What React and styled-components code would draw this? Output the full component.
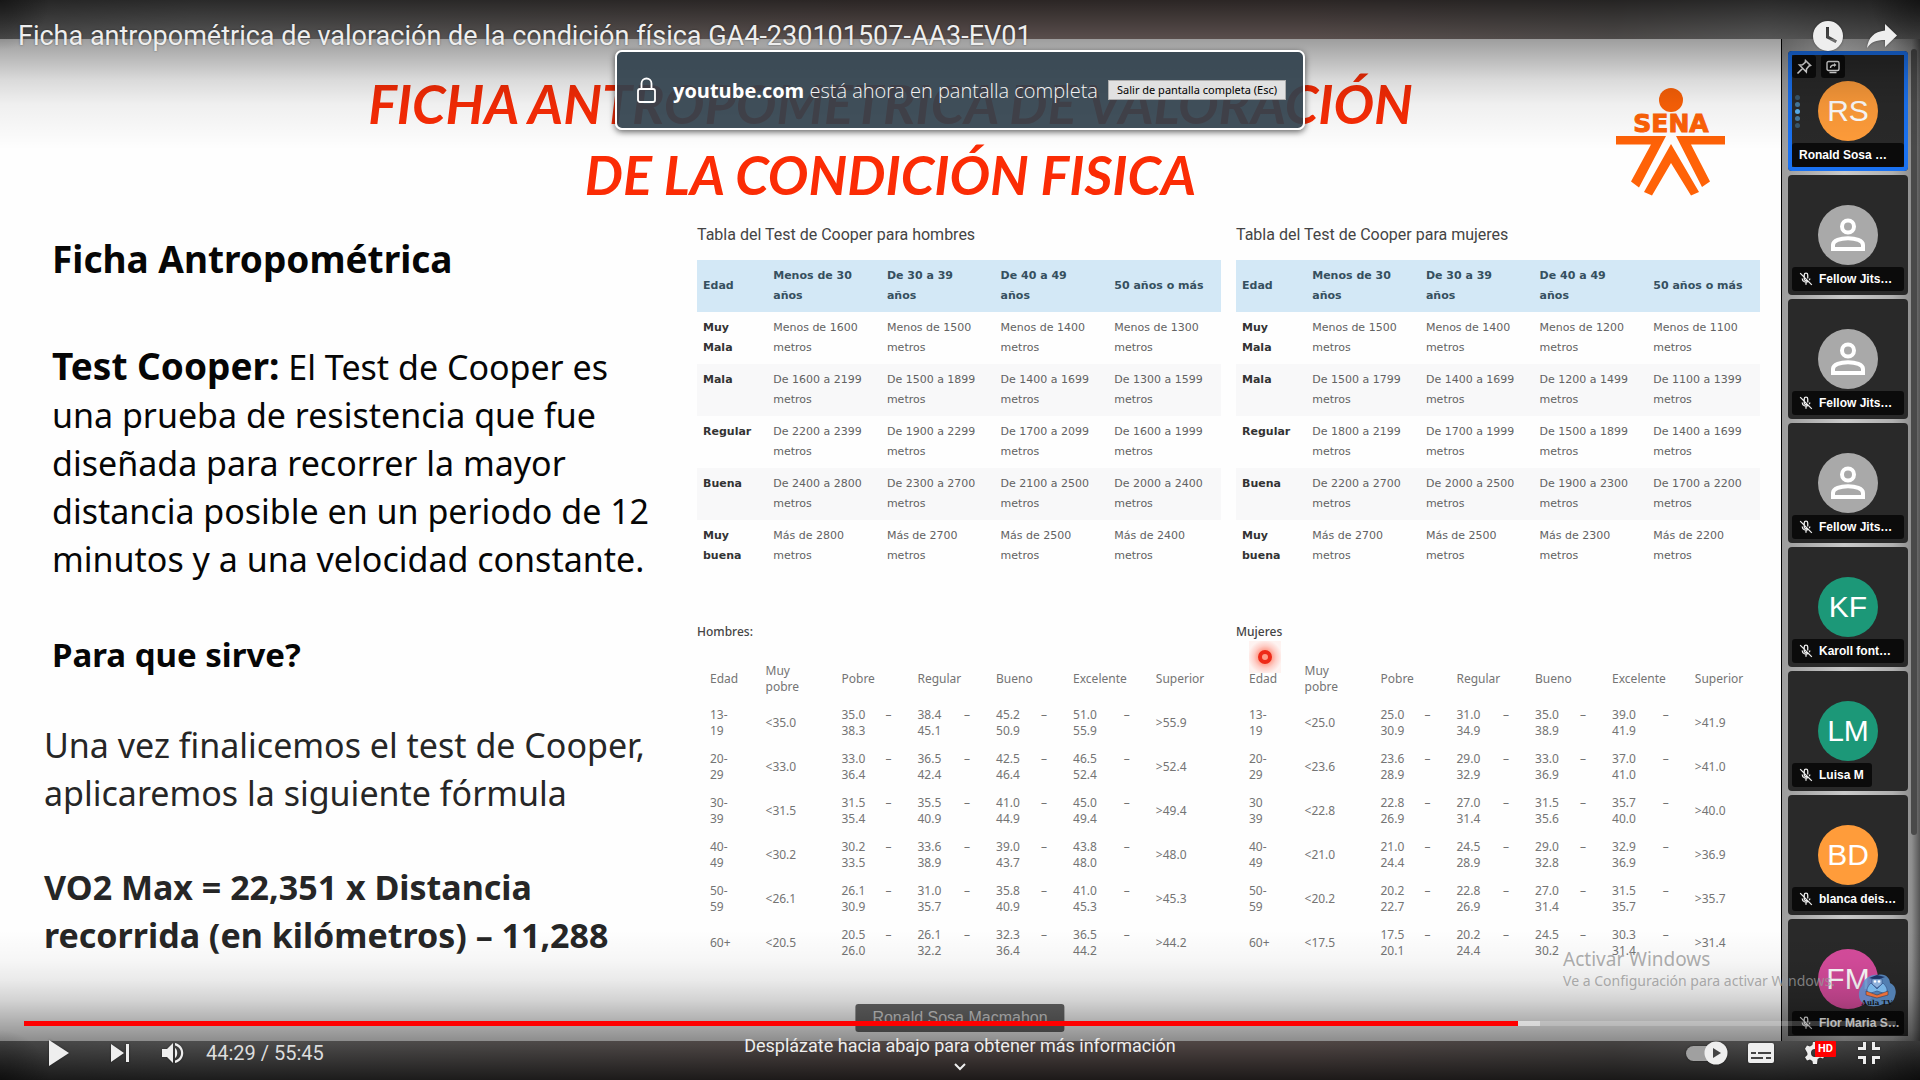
import React from "react";
import styled, { createGlobalStyle } from "styled-components";

const Global = createGlobalStyle`
  *, *::before, *::after { box-sizing: border-box; }
  html, body { margin: 0; background: #222; }
  h1, h2, h3, p { margin: 0; font-weight: inherit; font-size: inherit; }
  button { margin: 0; padding: 0; border: 0; background: none; color: inherit; font: inherit; cursor: pointer; }
`;

/* ---------- Player shell ---------- */

const Player = styled.main`
  position: relative;
  height: 100vh;
  overflow: hidden;
  font-family: Roboto, "Liberation Sans", sans-serif;
  color: #eee;
`;

const Video = styled.section`
  display: grid;
  grid-template: 39px minmax(0, 1fr) 39px / minmax(0, 1fr) 139px;
  height: 100%;
  background: linear-gradient(to right, #7c7c7c, #8c8c8c 10%, #8b8583 26%, #907e7b 45%, #907e7b 68%, #7c7775 84%, #8a8a8a 92%, #6c6c6c);
`;

const Shade = styled.div`
  position: absolute;
  inset: 0;
  pointer-events: none;
  background:
    radial-gradient(circle at 0 0, rgba(0,0,0,.4), transparent 50px),
    radial-gradient(circle at 0 100%, rgba(0,0,0,.4), transparent 50px),
    radial-gradient(circle at 100% 0, rgba(0,0,0,.4), transparent 50px),
    radial-gradient(circle at 100% 100%, rgba(0,0,0,.4), transparent 50px),
    linear-gradient(to bottom, rgba(0,0,0,.7), rgba(0,0,0,.38) 39px, rgba(0,0,0,.26) 60px, rgba(0,0,0,.14) 80px, rgba(0,0,0,.06) 104px, transparent 150px),
    linear-gradient(to top, rgba(0,0,0,.8), rgba(0,0,0,.46) 37px, rgba(0,0,0,.3) 60px, rgba(0,0,0,.17) 80px, rgba(0,0,0,.08) 100px, rgba(0,0,0,.03) 120px, transparent 150px);
`;

/* ---------- Slide ---------- */

const Slide = styled.article`
  grid-row: 2;
  display: flex;
  flex-direction: column;
  background: #fefefe;
  overflow: hidden;
`;

const SlideHead = styled.header`
  display: grid;
  grid-template-columns: 1fr auto 1fr;
  padding: 29px 55px 0;
`;

const SlideTitle = styled.h1`
  grid-column: 2;
  font: italic 700 54px/71px Lato, "Noto Sans", sans-serif;
  color: #fb2c05;
  text-align: center;
`;

const Logo = styled.svg`
  justify-self: end;
  width: 110px;
  height: 108px;
  margin-top: 20px;
`;

const SlideBody = styled.div`
  display: grid;
  grid-template-columns: 697fr 1084fr;
  padding-top: 13px;
`;

const Copy = styled.div`
  display: flex;
  flex-direction: column;
  gap: 42px;
  padding: 12px 0 0 44px;
  font: 34px/48px "Noto Sans", "Open Sans", sans-serif;
  color: #262626;
  white-space: nowrap;
`;

const Topic = styled.section`
  display: flex;
  flex-direction: column;
  gap: 48px;
  padding-left: 8px;
  color: #060606;
`;

const Formula = styled.section`
  display: flex;
  flex-direction: column;
  gap: 46px;
`;

const Heading = styled.h2`
  font-size: 37px;
  font-weight: 700;
  padding-bottom: 12px;
`;

const Lead = styled.strong`
  font-size: 37px;
  line-height: 1;
`;

const Question = styled.h3`
  font-size: 33px;
  font-weight: 700;
`;

const Strong = styled.p`
  font-weight: 700;
`;

const Charts = styled.div`
  position: relative;
  display: grid;
  grid-template-columns: 1fr 1fr;
  column-gap: 15px;
  row-gap: 52px;
  padding-right: 21px;
  align-content: start;
`;

const CooperTable = styled.table`
  width: 100%;
  table-layout: fixed;
  border-collapse: collapse;
  font: 11px/20px "DejaVu Sans", Verdana, sans-serif;
  color: #626262;

  caption {
    padding-bottom: 13px;
    font: 16px/24px Roboto, sans-serif;
    color: #444;
    text-align: left;
  }
  th, td { padding: 6px 0 6px 6px; text-align: left; vertical-align: top; }
  th { color: #333; font-weight: 700; }
  thead tr { background: #d3e8f6; }
  thead th { color: #36505f; vertical-align: middle; }
  tbody tr:nth-child(even) { background: #f8f8f9; }
`;

const RangeTable = styled.table`
  width: 100%;
  table-layout: fixed;
  border-collapse: collapse;
  font: 12px/16px "Noto Sans", "Open Sans", sans-serif;
  color: #747474;

  caption {
    padding-bottom: 17px;
    font-weight: 500;
    color: #444;
    text-align: left;
  }
  th, td { padding: 6px 13px; text-align: left; font-weight: 400; white-space: nowrap; }
`;

const Col = styled.col`
  width: ${(p) => p.$share}%;
`;

const RangeStart = styled.span`
  display: flex;
  justify-content: space-between;
`;

const Pointer = styled.span`
  position: absolute;
  left: 552px;
  top: 418px;
  display: grid;
  place-items: center;
  width: 32px;
  height: 32px;
  background: radial-gradient(circle, rgba(255,90,60,.7) 20%, rgba(255,120,100,.35) 50%, rgba(255,160,140,.12) 75%);
  &::after {
    content: "";
    width: 14px;
    height: 14px;
    border: 4px solid #ee2a18;
    border-radius: 50%;
    background: #ff9c88;
  }
`;

/* ---------- Participants ---------- */

const Participants = styled.aside`
  grid-row: 2;
  position: relative;
  padding: 12px 12px 5px 6px;
  border-left: 1px solid #000;
  background: linear-gradient(to right, #9c9c9c, #c9c9c9 45%, #b0b0b0 80%, #8e8e8e 94%, #555);
`;

const TileList = styled.ul`
  display: flex;
  flex-direction: column;
  gap: 4px;
  height: 100%;
  margin: 0;
  padding: 0;
  overflow: hidden;
  list-style: none;
`;

const Tile = styled.li`
  position: relative;
  flex: none;
  display: flex;
  flex-direction: column;
  gap: 2px;
  height: 120px;
  padding: 30px 4px 0;
  border-radius: 4px;
  background: #292929;
  box-shadow: ${(p) => (p.$active ? "inset 0 0 0 4px #1a72f2" : "none")};
`;

const Avatar = styled.span`
  display: grid;
  place-items: center;
  align-self: center;
  width: 60px;
  height: 60px;
  border-radius: 50%;
  background: ${(p) => p.$color};
  color: #fff;
  font: 30px/60px "Liberation Sans", Arial, sans-serif;
`;

const NameTag = styled.span`
  display: flex;
  align-items: center;
  gap: 6px;
  align-self: ${(p) => (p.$short ? "flex-start" : "stretch")};
  height: 24px;
  padding: 0 8px 0 7px;
  border-radius: 3px;
  background: rgba(0,0,0,.72);
  color: #fff;
  font: 700 12px/24px "Liberation Sans", Arial, sans-serif;
  white-space: nowrap;
  svg { flex: none; }
`;

const Badges = styled.span`
  position: absolute;
  top: 4px;
  left: 4px;
  display: flex;
  gap: 5px;
`;

const Badge = styled.span`
  display: grid;
  place-items: center;
  width: 24px;
  height: 23px;
  border-radius: 3px;
  background: rgba(0,0,0,.7);
`;

const Levels = styled.span`
  position: absolute;
  left: 7px;
  top: 44px;
  display: flex;
  flex-direction: column;
  gap: 2px;
`;

const Level = styled.i`
  width: 5px;
  height: 5px;
  border-radius: 50%;
  background: #5ab0ee;
  opacity: ${(p) => p.$strength};
`;

const Scrollbar = styled.span`
  position: absolute;
  right: 3px;
  top: 10px;
  width: 6px;
  height: 78.4%;
  border-radius: 3px;
  background: #4a4a4a;
`;

/* ---------- Overlays ---------- */

const SpeakerName = styled.span`
  position: absolute;
  left: 50%;
  bottom: 48px;
  transform: translateX(-50%);
  padding: 0 17px;
  border-radius: 3px;
  background: #686868;
  color: #d4d4d4;
  font: 16px/28px "Liberation Sans", Arial, sans-serif;
  white-space: nowrap;
`;

const Watermark = styled.p`
  position: absolute;
  right: 85px;
  bottom: 88px;
  color: rgba(150,150,150,.8);
  font: 14px/22px "Noto Sans", "Open Sans", sans-serif;
  white-space: nowrap;
`;

const WatermarkTitle = styled.strong`
  display: block;
  font-size: 19px;
  font-weight: 400;
`;

const ChannelMark = styled.svg`
  position: absolute;
  right: 24px;
  bottom: 72px;
  width: 38px;
  height: 34px;
`;

const TopBar = styled.header`
  position: absolute;
  inset: 0 0 auto;
  display: flex;
  align-items: center;
  gap: 24px;
  height: 72px;
  padding: 0 22px 0 18px;
  text-shadow: 0 0 2px rgba(0,0,0,.5);
`;

const VideoTitle = styled.h2`
  flex: 1;
  font-size: 27px;
  line-height: 32px;
`;

const Notice = styled.div`
  position: absolute;
  top: 50px;
  left: 50%;
  transform: translateX(-50%);
  display: flex;
  align-items: center;
  width: 690px;
  height: 80px;
  padding: 0 17px 0 20px;
  border: 2px solid #fff;
  border-radius: 7px;
  background: rgba(50,66,77,.93);
  box-shadow: 0 2px 6px rgba(0,0,0,.6);
  color: #f4f4f4;
  font: 300 20px/28px "Open Sans", "Noto Sans", sans-serif;
  white-space: nowrap;
`;

const NoticeText = styled.p`
  flex: 1;
  padding: 2px 0 0 17px;
  strong { font-weight: 700; color: #fff; }
`;

const ExitButton = styled.button`
  height: 20px;
  padding: 0 8px;
  border: 1px solid #adadad;
  background: #e1e1e1;
  color: #000;
  font: 11px/16px "Noto Sans", "Open Sans", sans-serif;
`;

const BottomBar = styled.footer`
  position: absolute;
  inset: auto 0 0;
`;

const Progress = styled.input`
  appearance: none;
  display: block;
  width: calc(100% - 48px);
  height: 5px;
  margin: 0 24px;
  background: linear-gradient(to right, #f00 79.8%, rgba(255,255,255,.55) 79.8% 81%, rgba(255,255,255,.2) 81%);
  &::-webkit-slider-thumb { appearance: none; width: 0; height: 0; }
`;

const Controls = styled.div`
  display: grid;
  grid-template-columns: 1fr auto 1fr;
  height: 54px;
  padding: 0 24px;
`;

const Group = styled.div`
  display: flex;
  align-items: center;
  padding-left: 4px;
  justify-content: ${(p) => (p.$end ? "flex-end" : "flex-start")};
`;

const Control = styled.button`
  position: relative;
  display: grid;
  place-items: center;
  width: ${(p) => p.$width || 54}px;
  height: 54px;
  svg { fill: #eee; filter: drop-shadow(0 0 1px rgba(0,0,0,.4)); }
`;

const Time = styled.span`
  padding-left: 10px;
  color: #ddd;
  font-size: 20px;
  line-height: 24px;
`;

const More = styled.button`
  display: flex;
  flex-direction: column;
  align-items: center;
  align-self: start;
  gap: 5px;
  padding-top: 8px;
  font-size: 18px;
  line-height: 24px;
`;

const Hd = styled.span`
  position: absolute;
  left: 27px;
  top: 15px;
  padding: 0 3px;
  border-radius: 1px;
  background: #f00;
  color: #fff;
  font: 700 11px/16px Roboto, sans-serif;
`;

/* ---------- Icons ---------- */

const MicOff = () => (
  <svg width="14" height="14" viewBox="0 0 24 24" fill="none" stroke="#eee" strokeWidth="2.2">
    <path d="M9 9V5a3 3 0 0 1 6 0v6M9 9v3a3 3 0 0 0 5 2M5.500 11a6.500 6.500 0 0 0 10.500 5M18.500 11a6 6 0 0 1-.8 3M12 18v4M2 2l20 20" />
  </svg>
);

const Person = () => (
  <svg width="36" height="36" viewBox="0 0 36 36" fill="none" stroke="#fff" strokeWidth="4">
    <circle cx="18" cy="9.500" r="6" />
    <path d="M3 32v-4c0-9 30-9 30 0v4z" />
  </svg>
);

const Pin = () => (
  <svg width="16" height="16" viewBox="0 0 16 16" fill="none" stroke="#eee" strokeWidth="1.6">
    <path d="M9.500 1.500l5 5-1.500.5-2.500 3-.2 3L3.500 6l3-.2 2.800-2.500zM6.500 9.500L1.500 14.500" />
  </svg>
);

const Screen = () => (
  <svg width="14" height="14" viewBox="0 0 14 14" fill="none" stroke="#eee" strokeWidth="1.4">
    <rect x="1" y="1.500" width="12" height="9" rx="1.500" />
    <path d="M3.500 12.500h7M4.500 8c0-2 1.500-3 4-3" />
    <path d="M8 3l2.500 2L8 7z" fill="#eee" stroke="none" />
  </svg>
);

const SenaLogo = () => (
  <Logo viewBox="0 0 110 108" fill="#ff6207" role="img" aria-label="SENA">
    <circle cx="55" cy="12" r="12" />
    <text x="55" y="44" textAnchor="middle" fontFamily="DejaVu Sans, sans-serif" fontWeight="700" fontSize="25" stroke="#ff6207">SENA</text>
    <path d="M0 48H50L23 99.500 15 93.500 35 56.500H0zM109 48H60L86 99 94 93.500 75 56.500H109z" />
    <path d="M55 56L28 104l8 3.500L55 75l20 32.500 8-3.500z" />
  </Logo>
);

/* ---------- Data ---------- */

const ages = ["Edad", "Menos de 30\naños", "De 30 a 39\naños", "De 40 a 49\naños", "50 años o más"];
const levels = ["Muy\nMala", "Mala", "Regular", "Buena", "Muy\nbuena"];

const cooper = [
  {
    title: "Tabla del Test de Cooper para hombres",
    rows: [
      ["Menos de 1600", "Menos de 1500", "Menos de 1400", "Menos de 1300"],
      ["De 1600 a 2199", "De 1500 a 1899", "De 1400 a 1699", "De 1300 a 1599"],
      ["De 2200 a 2399", "De 1900 a 2299", "De 1700 a 2099", "De 1600 a 1999"],
      ["De 2400 a 2800", "De 2300 a 2700", "De 2100 a 2500", "De 2000 a 2400"],
      ["Más de 2800", "Más de 2700", "Más de 2500", "Más de 2400"],
    ],
  },
  {
    title: "Tabla del Test de Cooper para mujeres",
    rows: [
      ["Menos de 1500", "Menos de 1400", "Menos de 1200", "Menos de 1100"],
      ["De 1500 a 1799", "De 1400 a 1699", "De 1200 a 1499", "De 1100 a 1399"],
      ["De 1800 a 2199", "De 1700 a 1999", "De 1500 a 1899", "De 1400 a 1699"],
      ["De 2200 a 2700", "De 2000 a 2500", "De 1900 a 2300", "De 1700 a 2200"],
      ["Más de 2700", "Más de 2500", "Más de 2300", "Más de 2200"],
    ],
  },
];

const rangeHead = ["Edad", "Muy\npobre", "Pobre", "Regular", "Bueno", "Excelente", "Superior"];

const ranges = [
  {
    title: "Hombres:",
    rows: [
      ["13-\n19", "<35.0", "35.0 38.3", "38.4 45.1", "45.2 50.9", "51.0 55.9", ">55.9"],
      ["20-\n29", "<33.0", "33.0 36.4", "36.5 42.4", "42.5 46.4", "46.5 52.4", ">52.4"],
      ["30-\n39", "<31.5", "31.5 35.4", "35.5 40.9", "41.0 44.9", "45.0 49.4", ">49.4"],
      ["40-\n49", "<30.2", "30.2 33.5", "33.6 38.9", "39.0 43.7", "43.8 48.0", ">48.0"],
      ["50-\n59", "<26.1", "26.1 30.9", "31.0 35.7", "35.8 40.9", "41.0 45.3", ">45.3"],
      ["60+", "<20.5", "20.5 26.0", "26.1 32.2", "32.3 36.4", "36.5 44.2", ">44.2"],
    ],
  },
  {
    title: "Mujeres",
    rows: [
      ["13-\n19", "<25.0", "25.0 30.9", "31.0 34.9", "35.0 38.9", "39.0 41.9", ">41.9"],
      ["20-\n29", "<23.6", "23.6 28.9", "29.0 32.9", "33.0 36.9", "37.0 41.0", ">41.0"],
      ["30\n39", "<22.8", "22.8 26.9", "27.0 31.4", "31.5 35.6", "35.7 40.0", ">40.0"],
      ["40-\n49", "<21.0", "21.0 24.4", "24.5 28.9", "29.0 32.8", "32.9 36.9", ">36.9"],
      ["50-\n59", "<20.2", "20.2 22.7", "22.8 26.9", "27.0 31.4", "31.5 35.7", ">35.7"],
      ["60+", "<17.5", "17.5 20.1", "20.2 24.4", "24.5 30.2", "30.3 31.4", ">31.4"],
    ],
  },
];

const people = [
  { initials: "RS", name: "Ronald Sosa …", color: "#ff9c3a", active: true },
  { name: "Fellow Jits…", color: "#a9a9a9" },
  { name: "Fellow Jits…", color: "#a9a9a9" },
  { name: "Fellow Jits…", color: "#a9a9a9" },
  { initials: "KF", name: "Karoll font…", color: "#1c9878" },
  { initials: "LM", name: "Luisa M", color: "#1c9878", short: true },
  { initials: "BD", name: "blanca deis…", color: "#ff9c3a" },
  { initials: "FM", name: "Flor Maria S…", color: "#d64c9c" },
];

const lines = (text) =>
  text.split("\n").map((line, i) => (
    <React.Fragment key={i}>
      {i > 0 && <br />}
      {line}
    </React.Fragment>
  ));

const Cooper = ({ title, rows }) => (
  <CooperTable>
    <caption>{title}</caption>
    <colgroup>
      {[13.4, 21.7, 21.7, 21.7, 21.5].map((w, i) => <Col key={i} $share={w} />)}
    </colgroup>
    <thead>
      <tr>{ages.map((a) => <th key={a} scope="col">{lines(a)}</th>)}</tr>
    </thead>
    <tbody>
      {rows.map((row, r) => (
        <tr key={r}>
          <th scope="row">{lines(levels[r])}</th>
          {row.map((cell) => <td key={cell}>{cell}<br />metros</td>)}
        </tr>
      ))}
    </tbody>
  </CooperTable>
);

const Ranges = ({ title, rows }) => (
  <RangeTable>
    <caption>{title}</caption>
    <colgroup>
      {[10.6, 14.5, 14.5, 15, 14.7, 15.8, 14.9].map((w, i) => <Col key={i} $share={w} />)}
    </colgroup>
    <thead>
      <tr>{rangeHead.map((h) => <th key={h} scope="col">{lines(h)}</th>)}</tr>
    </thead>
    <tbody>
      {rows.map((row) => (
        <tr key={row[0]}>
          {row.map((cell, i) => {
            if (i === 0) return <th key={i} scope="row">{lines(cell)}</th>;
            const [from, to] = cell.split(" ");
            return to ? (
              <td key={i}>
                <RangeStart><span>{from}</span><span>–</span></RangeStart>
                {to}
              </td>
            ) : <td key={i}>{cell}</td>;
          })}
        </tr>
      ))}
    </tbody>
  </RangeTable>
);

export default function App() {
  return (
    <Player>
      <Global />
      <Video>
        <Slide>
          <SlideHead>
            <SlideTitle>FICHA ANTROPOMETRICA DE VALORACIÓN<br />DE LA CONDICIÓN FISICA</SlideTitle>
            <SenaLogo />
          </SlideHead>
          <SlideBody>
            <Copy>
              <Topic>
                <Heading>Ficha Antropométrica</Heading>
                <p>
                  <Lead>Test Cooper:</Lead> El Test de Cooper es<br />
                  una prueba de resistencia que fue<br />
                  diseñada para recorrer la mayor<br />
                  distancia posible en un periodo de 12<br />
                  minutos y a una velocidad constante.
                </p>
                <Question>Para que sirve?</Question>
              </Topic>
              <Formula>
                <p>Una vez finalicemos el test de Cooper,<br />aplicaremos la siguiente fórmula</p>
                <Strong>VO2 Max = 22,351 x Distancia<br />recorrida (en kilómetros) – 11,288</Strong>
              </Formula>
            </Copy>
            <Charts>
              {cooper.map((t) => <Cooper key={t.title} {...t} />)}
              {ranges.map((t) => <Ranges key={t.title} {...t} />)}
              <Pointer />
            </Charts>
          </SlideBody>
        </Slide>
        <Participants>
          <TileList>
            {people.map((p, i) => (
              <Tile key={i} $active={p.active}>
                <Avatar $color={p.color}>{p.initials || <Person />}</Avatar>
                <NameTag $short={p.short}>
                  {!p.active && <MicOff />}
                  {p.name}
                </NameTag>
                {p.active && (
                  <>
                    <Badges>
                      <Badge><Pin /></Badge>
                      <Badge><Screen /></Badge>
                    </Badges>
                    <Levels>
                      {[0.35, 0.6, 1, 0.6, 0.35].map((s, n) => <Level key={n} $strength={s} />)}
                    </Levels>
                  </>
                )}
              </Tile>
            ))}
          </TileList>
          <Scrollbar />
        </Participants>
      </Video>

      <SpeakerName>Ronald Sosa Macmahon</SpeakerName>
      <Shade />

      <Watermark>
        <WatermarkTitle>Activar Windows</WatermarkTitle>
        Ve a Configuración para activar Windows.
      </Watermark>

      <ChannelMark viewBox="0 0 38 34" role="img" aria-label="Aula TV">
        <path d="M4 12C6 4 13 0 20 1c7-2 12 3 12 8 5 2 7 8 5 13-1 6-6 9-12 8-6 3-13 3-18 0C0 28-1 17 4 12z" fill="#5b8fca" fillOpacity=".85" />
        <path d="M11 4l8-3 8 2-8 3z" fill="#1d3566" />
        <path d="M14 5h10v5l-5 4-5-4z" fill="#8fb2dc" stroke="#2b4a80" strokeWidth=".6" />
        <circle cx="17" cy="7.500" r="1.200" fill="#fff" />
        <circle cx="21" cy="7.500" r="1.200" fill="#fff" />
        <path d="M13 9c-4 4-5 7-3 11l9-3 9 3c2-4 1-7-3-11l-6 6z" fill="#7ab6e6" stroke="#2b4a80" strokeWidth=".6" />
        <path d="M8 17l11 4 11-4v4l-11 3-11-3z" fill="#e8703a" stroke="#26334f" strokeWidth=".5" />
        <text x="19" y="31" textAnchor="middle" fontFamily="DejaVu Serif, serif" fontWeight="700" fontSize="7" fill="#111">Aula TV</text>
      </ChannelMark>

      <TopBar>
        <VideoTitle>Ficha antropométrica de valoración de la condición física GA4-230101507-AA3-EV01</VideoTitle>
        <Control $width={30} aria-label="Ver más tarde">
          <svg width="32" height="32" viewBox="0 0 32 32">
            <path fillRule="evenodd" d="M16 1a15 15 0 1 0 0 30 15 15 0 0 0 0-30zM14 7h3v9l8 4.500-1.500 2.500L14 18z" />
          </svg>
        </Control>
        <Control $width={32} aria-label="Compartir">
          <svg width="32" height="26" viewBox="0 0 32 26">
            <path d="M19 1l12 11.500L19 24v-7C10 17 5 19 1 25 2 15 8 8.500 19 7.500z" />
          </svg>
        </Control>
      </TopBar>

      <Notice role="status">
        <svg width="19" height="26" viewBox="0 0 19 26" fill="none" stroke="#fff" strokeWidth="1.8">
          <rect x="1" y="12" width="17" height="13" rx="2" />
          <path d="M4.500 12V6.500a5 5 0 0 1 10 0V12" />
        </svg>
        <NoticeText><strong>youtube.com</strong> está ahora en pantalla completa</NoticeText>
        <ExitButton>Salir de pantalla completa (Esc)</ExitButton>
      </Notice>

      <BottomBar>
        <Progress type="range" min="0" max="3345" defaultValue="2669" aria-label="Progreso" />
        <Controls>
          <Group>
            <Control $width={62} aria-label="Reproducir">
              <svg width="20" height="26" viewBox="0 0 20 26"><path d="M0 0l20 13L0 26z" /></svg>
            </Control>
            <Control $width={60} aria-label="Siguiente">
              <svg width="18" height="18" viewBox="0 0 18 18"><path d="M0 0l13 9L0 18zM15 0h3v18h-3z" /></svg>
            </Control>
            <Control $width={46} aria-label="Silenciar">
              <svg width="22" height="22" viewBox="0 0 22 22">
                <path d="M0 7v8h5l6 6V1L5 7zM13 6v10c3-1.500 3-8.500 0-10zM13 1v2.500c8 2 8 13 0 15V21c11-2.500 11-17.500 0-20z" />
              </svg>
            </Control>
            <Time>44:29 / 55:45</Time>
          </Group>
          <More>
            Desplázate hacia abajo para obtener más información
            <svg width="12" height="8" viewBox="0 0 12 8" fill="none" stroke="#eee" strokeWidth="2"><path d="M1 1l5 5 5-5" /></svg>
          </More>
          <Group $end>
            <Control aria-label="Reproducción automática">
              <svg width="42" height="24" viewBox="0 0 42 24">
                <rect x="0" y="5" width="36" height="15" rx="7.500" fill="#a0a0a0" />
                <circle cx="30" cy="12" r="11.500" />
                <path d="M27 7l8 5-8 5z" fill="#444" />
              </svg>
            </Control>
            <Control aria-label="Subtítulos">
              <svg width="26" height="20" viewBox="0 0 26 20">
                <rect width="26" height="20" rx="2" />
                <path d="M3 9h5v2H3zM10 9h13v2H10zM3 14h12v2H3zM18 14h5v2h-5z" fill="#444" />
              </svg>
            </Control>
            <Control aria-label="Configuración">
              <svg width="24" height="24" viewBox="0 0 24 24">
                <path fillRule="evenodd" d="M10 1h4l.6 3 2.400 1.400 3-1 2 3.400-2.400 2.100v2.200l2.400 2.100-2 3.400-3-1-2.400 1.400L14 23h-4l-.6-3L7 18.600l-3 1-2-3.400 2.400-2.100v-2.200L2 7.800l2-3.400 3 1L9.400 4zM12 8a4 4 0 1 0 0 8 4 4 0 0 0 0-8z" />
              </svg>
              <Hd>HD</Hd>
            </Control>
            <Control aria-label="Salir de pantalla completa">
              <svg width="22" height="22" viewBox="0 0 22 22">
                <path d="M5 0h3v8H0V5h5zM14 0h3v5h5v3h-8zM0 14h8v8H5v-5H0zM14 14h8v3h-5v5h-3z" />
              </svg>
            </Control>
          </Group>
        </Controls>
      </BottomBar>
    </Player>
  );
}
